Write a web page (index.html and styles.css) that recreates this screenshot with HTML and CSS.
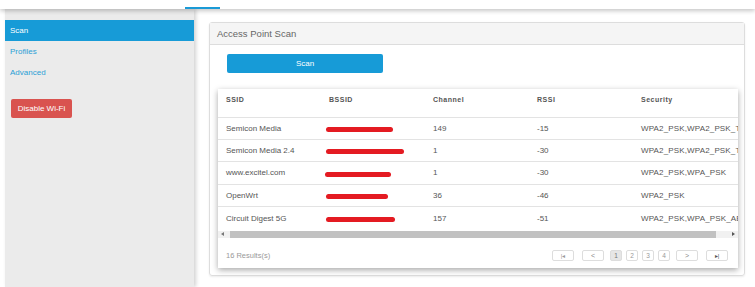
FILE: index.html
```html
<!DOCTYPE html>
<html lang="en">
<head>
  <meta charset="UTF-8" />
  <title>Wi-Fi Scan</title>
  <link rel="stylesheet" href="styles.css">
</head>
<body>

<div class="topbar">
  <div class="tab-mark"></div>
</div>

<div class="layout">
  <aside class="sidebar">
    <a class="nav-item active">Scan</a>
    <a class="nav-item">Profiles</a>
    <a class="nav-item">Advanced</a>
    <button class="btn-danger">Disable Wi-Fi</button>
  </aside>

  <main class="main">
    <div class="panel">
      <div class="panel-head">Access Point Scan</div>
      <div class="panel-body">
        <button class="btn-scan">Scan</button>

        <div class="table-card">
          <div class="table-wrap">
            <table class="ap-table">
              <colgroup>
                <col class="c1"><col class="c2"><col class="c3"><col class="c4"><col class="c5">
              </colgroup>
              <thead>
                <tr><th>SSID</th><th>BSSID</th><th>Channel</th><th>RSSI</th><th>Security</th></tr>
              </thead>
              <tbody>
                <tr><td>Semicon Media</td><td><span class="redact" style="width:67px"></span></td><td>149</td><td>-15</td><td>WPA2_PSK,WPA2_PSK_TKIP</td></tr>
                <tr><td>Semicon Media 2.4</td><td><span class="redact" style="width:78px"></span></td><td>1</td><td>-30</td><td>WPA2_PSK,WPA2_PSK_TKIP</td></tr>
                <tr><td>www.excitel.com</td><td><span class="redact r3" style="width:66px"></span></td><td>1</td><td>-30</td><td>WPA2_PSK,WPA_PSK</td></tr>
                <tr><td>OpenWrt</td><td><span class="redact" style="width:62px"></span></td><td>36</td><td>-46</td><td>WPA2_PSK</td></tr>
                <tr><td>Circuit Digest 5G</td><td><span class="redact" style="width:69px"></span></td><td>157</td><td>-51</td><td>WPA2_PSK,WPA_PSK_AES</td></tr>
              </tbody>
            </table>
          </div>

          <div class="hscroll">
            <span class="arrow left"></span>
            <div class="thumb"></div>
            <span class="arrow right"></span>
          </div>

          <div class="table-foot">
            <span class="count">16 Results(s)</span>
            <div class="pager">
              <span class="pg wide">|&#9666;</span>
              <span class="pg wide chev">&lt;</span>
              <span class="pg current">1</span>
              <span class="pg">2</span>
              <span class="pg">3</span>
              <span class="pg">4</span>
              <span class="pg wide chev">&gt;</span>
              <span class="pg wide dark">&#9656;|</span>
            </div>
          </div>
        </div>
      </div>
    </div>
  </main>
</div>

</body>
</html>
```

FILE: styles.css
```css
html, body {
  margin: 0;
  padding: 0;
}

body {
  font-family: 'Liberation Sans', Arial, sans-serif;
  width: 755px;
  height: 287px;
  overflow: hidden;
  background: #fff;
  color: #555;
}

.topbar {
  height: 9px;
  display: flex;
  align-items: flex-end;
  position: relative;
  z-index: 2;
  background: #fff;
  box-shadow: 0 2px 4px rgba(0, 0, 0, 0.22);
}

.tab-mark {
  margin-left: 185px;
  width: 35px;
  height: 2px;
  background: #1a9ad6;
}

.layout {
  display: flex;
  height: 278px;
  padding-left: 5px;
}

.sidebar {
  flex: 0 0 189px;
  background: #ebebeb;
  padding-top: 11px;
  position: relative;
  z-index: 1;
  box-shadow: 2px 0 4px rgba(0, 0, 0, 0.18);
}

.nav-item {
  display: block;
  height: 21px;
  line-height: 21px;
  padding-left: 5px;
  font-size: 8px;
  color: #2a9fd6;
}

.nav-item.active {
  background: #179bd7;
  color: #fff;
}

.btn-danger {
  display: block;
  margin: 16px 0 0 6px;
  width: 61px;
  height: 19px;
  padding: 0;
  border: none;
  border-radius: 2px;
  background: #d9534f;
  color: #fff;
  font-family: inherit;
  font-size: 8px;
}

.main {
  flex: 1;
  min-width: 0;
  padding: 13px 10px 0 15px;
}

.panel {
  border: 1px solid #ddd;
  border-radius: 3px;
  box-shadow: 0 1px 2px rgba(0, 0, 0, 0.08);
  height: 254px;
  box-sizing: border-box;
}

.panel-head {
  height: 21px;
  line-height: 21px;
  padding-left: 7px;
  background: #f5f5f5;
  border-bottom: 1px solid #ddd;
  font-size: 9.5px;
  color: #666;
}

.panel-body {
  padding: 9px 6px 0 8px;
}

.btn-scan {
  display: block;
  margin-left: 9px;
  width: 156px;
  height: 19px;
  padding: 0;
  border: none;
  border-radius: 2px;
  background: #179bd7;
  color: #fff;
  font-family: inherit;
  font-size: 8px;
}

.table-card {
  margin-top: 16px;
  height: 179px;
  background: #fff;
  box-shadow: 0 2px 6px rgba(0, 0, 0, 0.35);
  display: flex;
  flex-direction: column;
}

.table-wrap {
  overflow: hidden;
}

.ap-table {
  width: 640px;
  table-layout: fixed;
  border-collapse: collapse;
  font-size: 8px;
}

.ap-table .c1 { width: 103px; }
.ap-table .c2 { width: 104px; }
.ap-table .c3 { width: 104px; }
.ap-table .c4 { width: 104px; }
.ap-table .c5 { width: 225px; }

.ap-table th {
  height: 28px;
  padding: 7px 0 0 8px;
  box-sizing: border-box;
  vertical-align: top;
  text-align: left;
  font-size: 7px;
  font-weight: bold;
  letter-spacing: 0.5px;
  color: #555;
}

.ap-table td {
  height: 22.4px;
  padding: 0 0 0 8px;
  box-sizing: border-box;
  border-top: 1px solid #e3e3e3;
  white-space: nowrap;
  overflow: hidden;
  color: #555;
}

.ap-table td:last-child {
  letter-spacing: 0.15px;
}

.redact {
  display: inline-block;
  vertical-align: middle;
  height: 5px;
  margin-left: -3px;
  margin-top: 2px;
  border-radius: 3px;
  background: #e41b22;
}

.redact.r3 {
  margin-left: -4px;
}

.hscroll {
  margin-top: 2px;
  height: 7px;
  background: #f1f1f1;
  display: flex;
  align-items: center;
}

.hscroll .thumb {
  flex: 1;
  height: 7px;
  margin: 0 16px 0 6px;
  background: #c1c1c1;
}

.arrow {
  width: 0;
  height: 0;
  border-top: 2px solid transparent;
  border-bottom: 2px solid transparent;
}

.arrow.left {
  margin-left: 3px;
  border-right: 3px solid #777;
}

.arrow.right {
  margin-right: 3px;
  border-left: 3px solid #555;
}

.table-foot {
  flex: 1;
  display: flex;
  align-items: center;
  justify-content: space-between;
  padding: 5px 8px 0 8px;
}

.count {
  font-size: 7.5px;
  color: #999;
}

.pager {
  display: flex;
  gap: 4px;
}

.pg {
  width: 12px;
  height: 11px;
  line-height: 10px;
  border: 1px solid #ddd;
  border-radius: 2px;
  box-sizing: border-box;
  text-align: center;
  font-size: 6.5px;
  color: #999;
}

.pg.wide {
  width: 22px;
  margin: 0 2px;
  font-size: 6px;
}

.pg.chev {
  font-size: 7px;
  color: #888;
}

.pg.dark {
  color: #555;
}

.pg.current {
  background: #e6e6e6;
  color: #777;
}
```
